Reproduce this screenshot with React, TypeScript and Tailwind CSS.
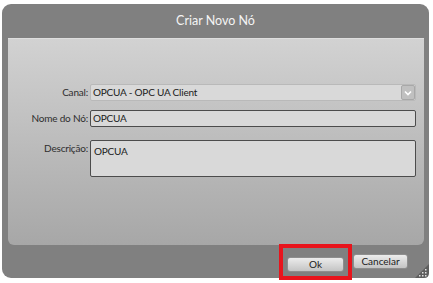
import React from "react";

const font = { fontFamily: 'Lato, "Noto Sans", sans-serif' };

function Field(props: { label: string; children: React.ReactNode; top?: boolean }) {
    return (
        <div className={`flex ${props.top ? "items-start" : "items-center"}`}>
            <div className={`w-[82px] pr-[2px] text-right text-[10px] tracking-[-0.2px] text-[#2e2e2e] ${props.top ? "pt-[1px]" : ""}`}>
                {props.label}
            </div>
            {props.children}
        </div>
    );
}

function ResizeGrip() {
    return (
        <svg className="absolute right-0 bottom-0" width="16" height="16" viewBox="0 0 16 16">
            <path d="M16 2 L16 11 Q16 16 11 16 L2 16 Z" fill="#5e5e5e" />
            {[
                [12, 7], [9, 10], [12, 10], [6, 13], [9, 13], [12, 13],
            ].map(([x, y], i) => (
                <rect key={i} x={x} y={y} width="1.5" height="1.5" fill="#e0e0e0" />
            ))}
        </svg>
    );
}

export default function App() {
    return (
        <div className="w-[433px] h-[283px] bg-white pt-[4px] pl-[2px] overflow-hidden" style={font}>
            <div className="relative w-[427px] h-[274px] rounded-[9px] bg-[#808080] flex flex-col">
                <div className="h-[34px] flex items-center justify-center text-[12.5px] text-[#f4f4f4]">
                    Criar Novo Nó
                </div>

                <div className="flex-1 ml-[6px] mr-[5px] rounded-b-[6px] border-t border-[#dedede] bg-gradient-to-b from-[#d2d2d2] to-[#a7a7a7] pt-[45px] pr-[8px] flex flex-col">
                    <Field label="Canal:">
                        <div className="flex-1 h-[17px] flex rounded-[2px] border border-[#b9b9b9] bg-[#d9d9d9]">
                            <div className="flex-1 pl-[2px] text-[10px] tracking-[-0.2px] leading-[15px] text-[#202020]">OPCUA - OPC UA Client</div>
                            <div className="w-[14px] h-[15px] flex items-center justify-center rounded-[2px] border border-[#a8a8a8] bg-[#c0c0c0]">
                                <svg width="8" height="6" viewBox="0 0 8 6">
                                    <path d="M1 1.5 L4 4.5 L7 1.5" stroke="#ffffff" strokeWidth="1.6" fill="none" />
                                </svg>
                            </div>
                        </div>
                    </Field>

                    <div className="mt-[9px]">
                        <Field label="Nome do Nó:">
                            <div className="flex-1 h-[17px] rounded-[2px] border border-[#4c4c4c] bg-[#d9d9d9] pl-[2px] text-[10px] tracking-[-0.2px] leading-[15px] text-[#202020]">
                                OPCUA
                            </div>
                        </Field>
                    </div>

                    <div className="mt-[13px]">
                        <Field label="Descrição:" top>
                            <div className="flex-1 h-[37px] rounded-[2px] border border-[#4c4c4c] bg-[#d9d9d9] pl-[3px] pt-[3px] text-[10px] tracking-[-0.2px] leading-[14px] text-[#202020]">
                                OPCUA
                            </div>
                        </Field>
                    </div>
                </div>

                <div className="h-[33px] flex items-center justify-end pr-[21px]">
                    <div className="border-[4px] border-[#e8141c] px-[4px] py-[2px]">
                        <button className="w-[57px] h-[15px] rounded-[3px] border border-[#8e8e8e] bg-gradient-to-b from-[#ececec] to-[#c4c4c4] text-[10px] leading-[13px] text-[#202020]">
                            Ok
                        </button>
                    </div>
                    <button className="ml-[1px] w-[55px] h-[15px] rounded-[3px] border border-[#8e8e8e] bg-gradient-to-b from-[#ececec] to-[#c4c4c4] text-[10px] leading-[13px] text-[#202020]">
                        Cancelar
                    </button>
                </div>

                <ResizeGrip />
            </div>
        </div>
    );
}
